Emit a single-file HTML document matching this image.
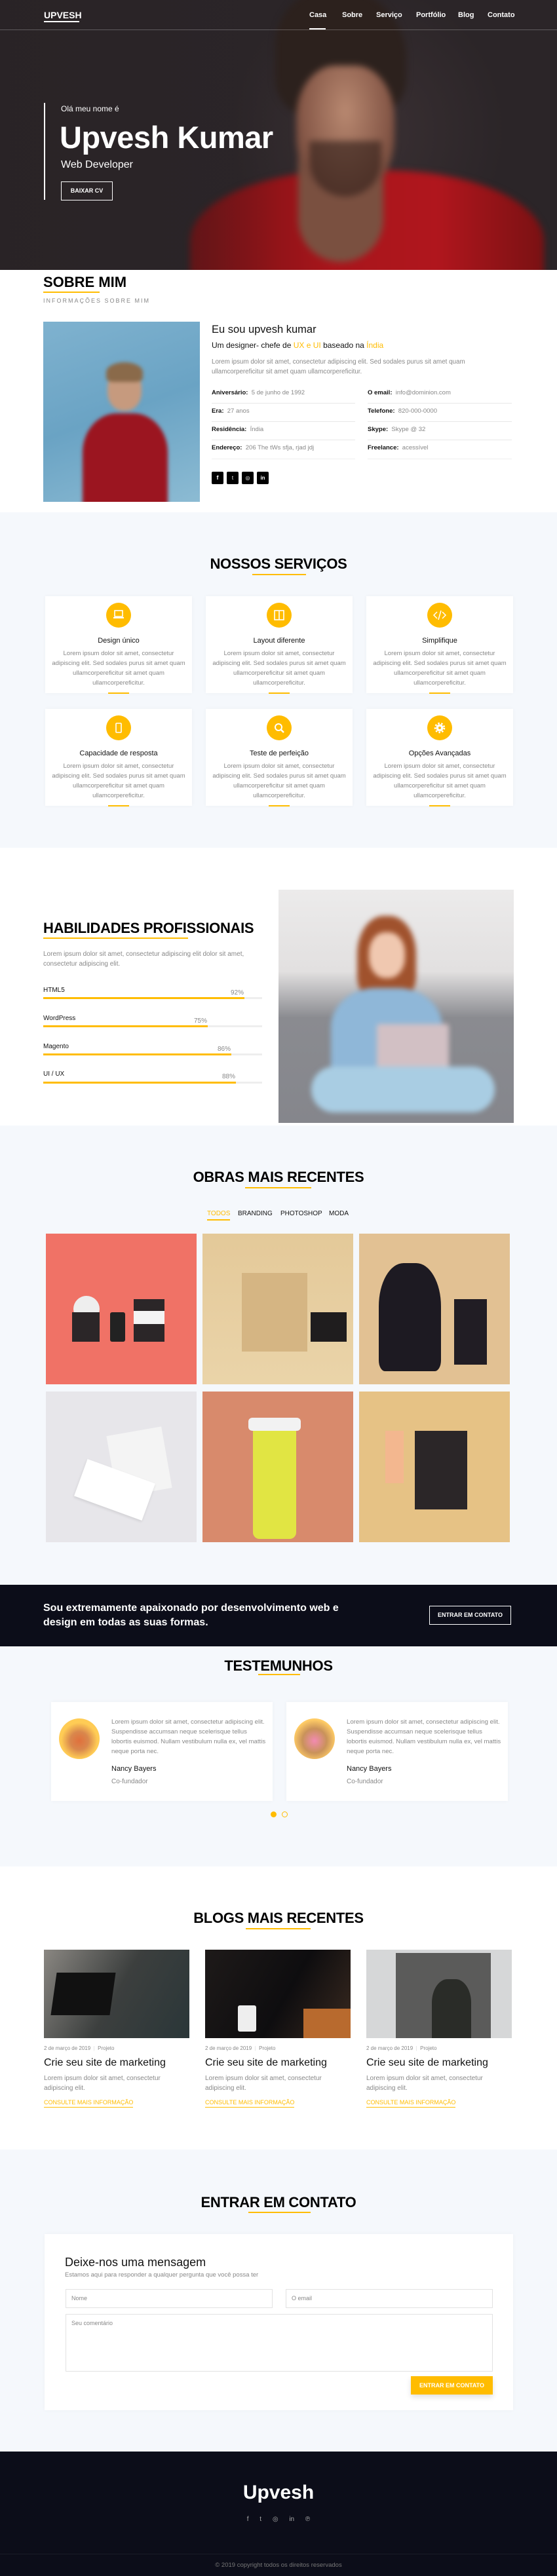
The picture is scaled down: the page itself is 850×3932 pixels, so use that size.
<!DOCTYPE html>
<html><head><meta charset="utf-8">
<style>
*{box-sizing:border-box;margin:0;padding:0}
body{width:850px;height:3932px;position:relative;font-family:"Liberation Sans",sans-serif;background:#fff;overflow:hidden;color:#111}
.a{position:absolute}
.sec{position:absolute;left:0;width:850px}
.h2{position:absolute;left:0;width:850px;text-align:center;font-weight:bold;font-size:22px;color:#000;letter-spacing:-0.3px}
.ul{position:absolute;height:2px;background:#ffbc00}
.p{font-size:10px;line-height:15px;color:#888}
.card{position:absolute;background:#fff;box-shadow:0 0 6px rgba(0,0,0,0.04)}
.ic{position:absolute;width:38px;height:38px;border-radius:50%;background:#ffbc00;left:93px;top:10px}
.ct{position:absolute;left:0;width:100%;text-align:center;top:62px;font-size:11px;color:#111}
.cp{position:absolute;left:10px;right:10px;top:80px;text-align:center;font-size:9.5px;line-height:15px;color:#888}
.cb{position:absolute;left:96px;bottom:-1px;width:32px;height:2px;background:#ffbc00}
.lbl{font-size:10px;color:#111}
.bar{position:absolute;left:66px;width:334px;height:3px;background:#eee}
.bar i{display:block;height:3px;background:#ffbc00}
.pt{position:absolute;width:230px;height:230px;overflow:hidden}
.bl{filter:blur(5px)}
</style></head><body>

<!-- HERO -->
<div class="sec" style="top:0;height:412px;background:#2b2528;overflow:hidden">
  <div class="a" style="left:0;top:0;width:850px;height:412px;background:radial-gradient(ellipse 300px 320px at 560px 200px,#3a3033 0%,#2b2528 70%)"></div>
  <div class="a bl" style="left:0;top:0;width:850px;height:412px">
    <div class="a" style="left:420px;top:-20px;width:200px;height:200px;border-radius:45% 55% 30% 30%;background:#2c211d"></div>
    <div class="a" style="left:290px;top:260px;width:540px;height:240px;border-radius:45% 45% 0 0;background:linear-gradient(90deg,#6e1214,#a8151b 40%,#b0161d 70%,#7a1113)"></div>
    <div class="a" style="left:455px;top:230px;width:130px;height:170px;border-radius:0 0 65px 65px;background:#7a5040"></div>
    <div class="a" style="left:452px;top:100px;width:150px;height:200px;border-radius:40% 40% 45% 45%;background:radial-gradient(ellipse at 50% 35%,#b88870,#845646 65%,#4e3228)"></div>
    <div class="a" style="left:472px;top:215px;width:110px;height:85px;border-radius:0 0 55px 55px;background:rgba(45,28,24,0.6)"></div>
  </div>
  <div class="a" style="left:0;top:0;width:850px;height:412px;background:linear-gradient(90deg,rgba(40,34,37,0.6),rgba(0,0,0,0) 50%)"></div>
  <div class="a" style="left:67px;top:15px;font-size:14px;font-weight:bold;color:#fff">UPVESH</div>
  <div class="a" style="left:67px;top:32px;width:54px;height:2px;background:#fff"></div>
  <div class="a" style="left:0;top:45px;width:850px;height:1px;background:rgba(255,255,255,0.25)"></div>
  <div class="a" style="top:17px;left:472px;font-size:11px;color:#fff;font-weight:bold">Casa</div>
  <div class="a" style="left:472px;top:43px;width:25px;height:2px;background:#fff"></div>
  <div class="a" style="top:17px;left:522px;font-size:11px;color:#fff;font-weight:bold">Sobre</div>
  <div class="a" style="top:17px;left:574px;font-size:11px;color:#fff;font-weight:bold">Serviço</div>
  <div class="a" style="top:17px;left:635px;font-size:11px;color:#fff;font-weight:bold">Portfólio</div>
  <div class="a" style="top:17px;left:699px;font-size:11px;color:#fff;font-weight:bold">Blog</div>
  <div class="a" style="top:17px;left:744px;font-size:11px;color:#fff;font-weight:bold">Contato</div>
  <div class="a" style="left:67px;top:157px;width:2px;height:148px;background:#fff"></div>
  <div class="a" style="left:93px;top:159px;font-size:12px;color:#fff">Olá meu nome é</div>
  <div class="a" style="left:91px;top:182px;font-size:47px;font-weight:bold;color:#fff;letter-spacing:-0.5px">Upvesh Kumar</div>
  <div class="a" style="left:93px;top:243px;font-size:16px;color:#fff">Web Developer</div>
  <div class="a" style="left:93px;top:277px;width:79px;height:29px;border:1px solid #fff;color:#fff;font-size:9px;font-weight:bold;text-align:center;line-height:27px">BAIXAR CV</div>
</div>

<!-- ABOUT -->
<div class="sec" style="top:412px;height:370px;background:#fff">
  <div class="a" style="left:66px;top:6px;font-size:22px;font-weight:bold;color:#000">SOBRE MIM</div>
  <div class="ul" style="left:66px;top:33px;width:86px"></div>
  <div class="a" style="left:66px;top:42px;font-size:9px;letter-spacing:2px;color:#888">INFORMAÇÕES SOBRE MIM</div>
  <div class="a" style="left:66px;top:79px;width:239px;height:275px;background:linear-gradient(160deg,#7fb2cf,#6aa3c4 50%,#8cbbd3);overflow:hidden">
    <div class="bl a" style="left:0;top:0;width:239px;height:275px;filter:blur(3px)">
      <div class="a" style="left:98px;top:72px;width:52px;height:64px;border-radius:45%;background:#c69a7e"></div>
      <div class="a" style="left:96px;top:62px;width:56px;height:30px;border-radius:50% 50% 20% 20%;background:#8a6a4a"></div>
      <div class="a" style="left:60px;top:140px;width:130px;height:150px;border-radius:40% 40% 0 0;background:#9b1520"></div>
    </div>
  </div>
  <div class="a" style="left:323px;top:82px;font-size:16.5px;color:#111">Eu sou upvesh kumar</div>
  <div class="a" style="left:323px;top:108px;font-size:12px;color:#111">Um designer- chefe de <span style="color:#ffbc00">UX e UI</span> baseado na <span style="color:#ffbc00">Índia</span></div>
  <div class="a p" style="left:323px;top:133px;width:460px;font-size:9.8px">Lorem ipsum dolor sit amet, consectetur adipiscing elit. Sed sodales purus sit amet quam ullamcorpereficitur sit amet quam ullamcorpereficitur.</div>
  <div class="a" style="left:323px;top:182px;width:219px;font-size:9.5px;color:#888"><b style="color:#111">Aniversário:</b>&nbsp; 5 de junho de 1992</div>
  <div class="a" style="left:323px;top:210px;font-size:9.5px;color:#888"><b style="color:#111">Era:</b>&nbsp; 27 anos</div>
  <div class="a" style="left:323px;top:238px;font-size:9.5px;color:#888"><b style="color:#111">Residência:</b>&nbsp; Índia</div>
  <div class="a" style="left:323px;top:266px;font-size:9.5px;color:#888"><b style="color:#111">Endereço:</b>&nbsp; 206 The tWs sfja, rjad jdj</div>
  <div class="a" style="left:561px;top:182px;font-size:9.5px;color:#888"><b style="color:#111">O email:</b>&nbsp; info@dominion.com</div>
  <div class="a" style="left:561px;top:210px;font-size:9.5px;color:#888"><b style="color:#111">Telefone:</b>&nbsp; 820-000-0000</div>
  <div class="a" style="left:561px;top:238px;font-size:9.5px;color:#888"><b style="color:#111">Skype:</b>&nbsp; Skype @ 32</div>
  <div class="a" style="left:561px;top:266px;font-size:9.5px;color:#888"><b style="color:#111">Freelance:</b>&nbsp; acessível</div>
  <div class="a" style="left:323px;top:203px;width:219px;height:1px;background:#e8e8e8"></div>
  <div class="a" style="left:323px;top:231px;width:219px;height:1px;background:#e8e8e8"></div>
  <div class="a" style="left:323px;top:259px;width:219px;height:1px;background:#e8e8e8"></div>
  <div class="a" style="left:323px;top:288px;width:219px;height:1px;background:#eee"></div>
  <div class="a" style="left:561px;top:203px;width:220px;height:1px;background:#e8e8e8"></div>
  <div class="a" style="left:561px;top:231px;width:220px;height:1px;background:#e8e8e8"></div>
  <div class="a" style="left:561px;top:259px;width:220px;height:1px;background:#e8e8e8"></div>
  <div class="a" style="left:561px;top:288px;width:220px;height:1px;background:#eee"></div>
  <div class="a" style="left:323px;top:308px;width:18px;height:19px;background:#000;border-radius:2px;color:#fff;font-size:9px;font-weight:bold;text-align:center;line-height:19px">f</div>
  <div class="a" style="left:346px;top:308px;width:18px;height:19px;background:#000;border-radius:2px;color:#fff;font-size:8px;text-align:center;line-height:19px">t</div>
  <div class="a" style="left:369px;top:308px;width:18px;height:19px;background:#000;border-radius:2px;color:#fff;font-size:8px;text-align:center;line-height:19px">◎</div>
  <div class="a" style="left:392px;top:308px;width:18px;height:19px;background:#000;border-radius:2px;color:#fff;font-size:8px;font-weight:bold;text-align:center;line-height:19px">in</div>
</div>

<!-- SERVICES -->
<div class="sec" style="top:782px;height:512px;background:#f5f8fc">
  <div class="h2" style="top:66px">NOSSOS SERVIÇOS</div>
  <div class="ul" style="left:385px;top:94px;width:82px"></div>
  <div class="card" style="left:69px;top:128px;width:224px;height:148px"><div class="ic"><svg width="38" height="38" viewBox="0 0 38 38"><rect x="13" y="12" width="12" height="9" fill="none" stroke="#fff" stroke-width="1.6"/><rect x="11" y="22" width="16" height="2" fill="#fff"/></svg></div><div class="ct">Design único</div><div class="cp">Lorem ipsum dolor sit amet, consectetur adipiscing elit. Sed sodales purus sit amet quam ullamcorpereficitur sit amet quam ullamcorpereficitur.</div><div class="cb"></div></div>
  <div class="card" style="left:314px;top:128px;width:224px;height:148px"><div class="ic"><svg width="38" height="38" viewBox="0 0 38 38"><rect x="12" y="12" width="14" height="14" fill="none" stroke="#fff" stroke-width="1.6"/><line x1="19" y1="12" x2="19" y2="26" stroke="#fff" stroke-width="1.6"/></svg></div><div class="ct">Layout diferente</div><div class="cp">Lorem ipsum dolor sit amet, consectetur adipiscing elit. Sed sodales purus sit amet quam ullamcorpereficitur sit amet quam ullamcorpereficitur.</div><div class="cb"></div></div>
  <div class="card" style="left:559px;top:128px;width:224px;height:148px"><div class="ic"><svg width="38" height="38" viewBox="0 0 38 38"><path d="M15 14l-5 5 5 5M23 14l5 5-5 5M21 12l-4 14" fill="none" stroke="#fff" stroke-width="1.5"/></svg></div><div class="ct">Simplifique</div><div class="cp">Lorem ipsum dolor sit amet, consectetur adipiscing elit. Sed sodales purus sit amet quam ullamcorpereficitur sit amet quam ullamcorpereficitur.</div><div class="cb"></div></div>
  <div class="card" style="left:69px;top:300px;width:224px;height:148px"><div class="ic"><svg width="38" height="38" viewBox="0 0 38 38"><rect x="15" y="12" width="8" height="14" rx="1" fill="none" stroke="#fff" stroke-width="1.6"/></svg></div><div class="ct">Capacidade de resposta</div><div class="cp">Lorem ipsum dolor sit amet, consectetur adipiscing elit. Sed sodales purus sit amet quam ullamcorpereficitur sit amet quam ullamcorpereficitur.</div><div class="cb"></div></div>
  <div class="card" style="left:314px;top:300px;width:224px;height:148px"><div class="ic"><svg width="38" height="38" viewBox="0 0 38 38"><circle cx="18" cy="18" r="5" fill="none" stroke="#fff" stroke-width="2"/><line x1="21.5" y1="21.5" x2="26" y2="26" stroke="#fff" stroke-width="2.5"/></svg></div><div class="ct">Teste de perfeição</div><div class="cp">Lorem ipsum dolor sit amet, consectetur adipiscing elit. Sed sodales purus sit amet quam ullamcorpereficitur sit amet quam ullamcorpereficitur.</div><div class="cb"></div></div>
  <div class="card" style="left:559px;top:300px;width:224px;height:148px"><div class="ic"><svg width="38" height="38" viewBox="0 0 38 38"><circle cx="19" cy="19" r="5.5" fill="#fff"/><circle cx="19" cy="19" r="7" fill="none" stroke="#fff" stroke-width="2.5" stroke-dasharray="2.5 2.5"/><circle cx="19" cy="19" r="2" fill="#ffbc00"/></svg></div><div class="ct">Opções Avançadas</div><div class="cp">Lorem ipsum dolor sit amet, consectetur adipiscing elit. Sed sodales purus sit amet quam ullamcorpereficitur sit amet quam ullamcorpereficitur.</div><div class="cb"></div></div>
</div>

<!-- SKILLS -->
<div class="sec" style="top:1294px;height:424px;background:#fff">
  <div class="a" style="left:66px;top:110px;font-size:22px;font-weight:bold;color:#000;letter-spacing:-0.3px">HABILIDADES PROFISSIONAIS</div>
  <div class="ul" style="left:66px;top:137px;width:221px"></div>
  <div class="a p" style="left:66px;top:155px;width:340px">Lorem ipsum dolor sit amet, consectetur adipiscing elit dolor sit amet, consectetur adipiscing elit.</div>
  <div class="a lbl" style="left:66px;top:212px">HTML5</div><div class="a p" style="left:352px;top:214px">92%</div>
  <div class="bar" style="top:228px"><i style="width:92%"></i></div>
  <div class="a lbl" style="left:66px;top:255px">WordPress</div><div class="a p" style="left:296px;top:257px">75%</div>
  <div class="bar" style="top:271px"><i style="width:75%"></i></div>
  <div class="a lbl" style="left:66px;top:298px">Magento</div><div class="a p" style="left:332px;top:300px">86%</div>
  <div class="bar" style="top:314px"><i style="width:86%"></i></div>
  <div class="a lbl" style="left:66px;top:340px">UI / UX</div><div class="a p" style="left:339px;top:342px">88%</div>
  <div class="bar" style="top:357px"><i style="width:88%"></i></div>
  <div class="a" style="left:425px;top:64px;width:359px;height:356px;background:linear-gradient(180deg,#ecebeb 0%,#e2e0e0 35%,#8a8b90 55%,#85868c 100%);overflow:hidden">
    <div class="a" style="left:0;top:0;width:359px;height:356px;filter:blur(4px)">
      <div class="a" style="left:120px;top:40px;width:90px;height:130px;border-radius:45% 45% 30% 30%;background:#a0522d"></div>
      <div class="a" style="left:138px;top:65px;width:55px;height:70px;border-radius:45%;background:#f0c8b0"></div>
      <div class="a" style="left:80px;top:150px;width:170px;height:150px;border-radius:40% 40% 10% 10%;background:#8fb7d8"></div>
      <div class="a" style="left:150px;top:205px;width:110px;height:85px;background:#d2c0c4;border-radius:4px"></div>
      <div class="a" style="left:50px;top:270px;width:280px;height:70px;border-radius:40px;background:#a9cde3"></div>
    </div>
  </div>
</div>

<!-- PORTFOLIO -->
<div class="sec" style="top:1718px;height:701px;background:#f5f8fc">
  <div class="h2" style="top:66px">OBRAS MAIS RECENTES</div>
  <div class="ul" style="left:374px;top:94px;width:101px"></div>
  <div class="a" style="left:316px;top:129px;font-size:10px;color:#ffbc00">TODOS</div>
  <div class="a" style="left:316px;top:143px;width:35px;height:1.5px;background:#ffbc00"></div>
  <div class="a" style="left:363px;top:129px;font-size:10px;color:#111">BRANDING</div>
  <div class="a" style="left:428px;top:129px;font-size:10px;color:#111">PHOTOSHOP</div>
  <div class="a" style="left:502px;top:129px;font-size:10px;color:#111">MODA</div>
  <div class="pt" style="left:70px;top:165px;background:#f07266">
    <div class="a" style="left:42px;top:95px;width:40px;height:40px;border-radius:50%;background:#eee"></div>
    <div class="a" style="left:40px;top:120px;width:42px;height:45px;background:#2b2628"></div>
    <div class="a" style="left:98px;top:120px;width:23px;height:45px;background:#222;border-radius:3px"></div>
    <div class="a" style="left:134px;top:100px;width:47px;height:65px;background:#2b2628"></div>
    <div class="a" style="left:134px;top:118px;width:47px;height:20px;background:#f4f4f4"></div>
  </div>
  <div class="pt" style="left:309px;top:165px;background:linear-gradient(180deg,#e4c999,#ead4a9)">
    <div class="a" style="left:60px;top:60px;width:100px;height:120px;background:#d5b583"></div>
    <div class="a" style="left:165px;top:120px;width:55px;height:45px;background:#1f1d1e"></div>
  </div>
  <div class="pt" style="left:548px;top:165px;background:#e2c193">
    <div class="a" style="left:30px;top:45px;width:95px;height:165px;border-radius:40% 40% 10% 10%;background:#1d1a22"></div>
    <div class="a" style="left:145px;top:100px;width:50px;height:100px;background:#211d24"></div>
  </div>
  <div class="pt" style="left:70px;top:406px;background:#e7e6ea">
    <div class="a" style="left:100px;top:60px;width:85px;height:95px;background:#f4f4f4;transform:rotate(-10deg)"></div>
    <div class="a" style="left:50px;top:120px;width:110px;height:60px;background:#fff;transform:rotate(20deg);box-shadow:0 2px 4px rgba(0,0,0,.1)"></div>
  </div>
  <div class="pt" style="left:309px;top:406px;background:#d88a6c">
    <div class="a" style="left:77px;top:45px;width:66px;height:180px;background:#e1e543;border-radius:4px 4px 10px 10px"></div>
    <div class="a" style="left:70px;top:40px;width:80px;height:20px;background:#f2f2f2;border-radius:6px"></div>
  </div>
  <div class="pt" style="left:548px;top:406px;background:#e6c285">
    <div class="a" style="left:85px;top:60px;width:80px;height:120px;background:#2b2628"></div>
    <div class="a" style="left:40px;top:60px;width:28px;height:80px;background:#f3b78f"></div>
  </div>
</div>

<!-- CTA -->
<div class="sec" style="top:2419px;height:94px;background:#0c0d19">
  <div class="a" style="left:66px;top:25px;font-size:16px;font-weight:bold;color:#fff;line-height:22px;width:480px">Sou extremamente apaixonado por desenvolvimento web e design em todas as suas formas.</div>
  <div class="a" style="left:655px;top:32px;width:125px;height:29px;border:1px solid #fff;color:#fff;font-size:9px;font-weight:bold;text-align:center;line-height:27px">ENTRAR EM CONTATO</div>
</div>

<!-- TESTIMONIALS -->
<div class="sec" style="top:2513px;height:336px;background:#f5f8fc">
  <div class="h2" style="top:17px">TESTEMUNHOS</div>
  <div class="ul" style="left:394px;top:42px;width:64px"></div>
  <div class="card" style="left:78px;top:85px;width:338px;height:151px">
    <div class="a" style="left:12px;top:25px;width:62px;height:62px;border-radius:50%;background:radial-gradient(circle at 50% 55%,#e0703c 0,#d9874d 30%,#ffcc55 60%)"></div>
    <div class="a p" style="left:92px;top:23px;width:240px;font-size:9.6px">Lorem ipsum dolor sit amet, consectetur adipiscing elit. Suspendisse accumsan neque scelerisque tellus lobortis euismod. Nullam vestibulum nulla ex, vel mattis neque porta nec.</div>
    <div class="a" style="left:92px;top:96px;font-size:11px;color:#111">Nancy Bayers</div>
    <div class="a p" style="left:92px;top:114px">Co-fundador</div>
  </div>
  <div class="card" style="left:437px;top:85px;width:338px;height:151px">
    <div class="a" style="left:12px;top:25px;width:62px;height:62px;border-radius:50%;background:radial-gradient(circle at 50% 55%,#f28bb2 0,#c9925a 40%,#ffcc66 70%)"></div>
    <div class="a p" style="left:92px;top:23px;width:240px;font-size:9.6px">Lorem ipsum dolor sit amet, consectetur adipiscing elit. Suspendisse accumsan neque scelerisque tellus lobortis euismod. Nullam vestibulum nulla ex, vel mattis neque porta nec.</div>
    <div class="a" style="left:92px;top:96px;font-size:11px;color:#111">Nancy Bayers</div>
    <div class="a p" style="left:92px;top:114px">Co-fundador</div>
  </div>
  <div class="a" style="left:413px;top:252px;width:9px;height:9px;border-radius:50%;background:#ffbc00"></div>
  <div class="a" style="left:430px;top:252px;width:9px;height:9px;border-radius:50%;border:1px solid #ffbc00"></div>
</div>

<!-- BLOGS -->
<div class="sec" style="top:2849px;height:432px;background:#fff">
  <div class="h2" style="top:66px">BLOGS MAIS RECENTES</div>
  <div class="ul" style="left:375px;top:94px;width:99px"></div>
  <div class="a" style="left:67px;top:127px;width:222px;height:135px;background:linear-gradient(120deg,#8a8782,#3c3f3e 50%,#2a3638);overflow:hidden"><div class="a" style="left:15px;top:35px;width:90px;height:65px;background:#111;transform:skewX(-8deg)"></div></div>
  <div class="a" style="left:313px;top:127px;width:222px;height:135px;background:linear-gradient(120deg,#1e1a19,#0e0d0f 55%,#3a2a20);overflow:hidden"><div class="a" style="left:50px;top:85px;width:28px;height:40px;background:#eee;border-radius:3px"></div><div class="a" style="left:150px;top:90px;width:72px;height:45px;background:#b86a2e"></div></div>
  <div class="a" style="left:559px;top:127px;width:222px;height:135px;background:#d6d7d8;overflow:hidden"><div class="a" style="left:45px;top:5px;width:145px;height:130px;background:#5b5b5a"></div><div class="a" style="left:100px;top:45px;width:60px;height:90px;border-radius:40% 40% 0 0;background:#2a2c28"></div></div>
  <div class="a p" style="left:67px;top:270px;font-size:8px">2 de março de 2019 &nbsp;<span style="color:#ddd">|</span>&nbsp; Projeto</div>
  <div class="a p" style="left:313px;top:270px;font-size:8px">2 de março de 2019 &nbsp;<span style="color:#ddd">|</span>&nbsp; Projeto</div>
  <div class="a p" style="left:559px;top:270px;font-size:8px">2 de março de 2019 &nbsp;<span style="color:#ddd">|</span>&nbsp; Projeto</div>
  <div class="a" style="left:67px;top:291px;font-size:16px;color:#111">Crie seu site de marketing</div>
  <div class="a" style="left:313px;top:291px;font-size:16px;color:#111">Crie seu site de marketing</div>
  <div class="a" style="left:559px;top:291px;font-size:16px;color:#111">Crie seu site de marketing</div>
  <div class="a p" style="left:67px;top:316px;width:200px">Lorem ipsum dolor sit amet, consectetur adipiscing elit.</div>
  <div class="a p" style="left:313px;top:316px;width:200px">Lorem ipsum dolor sit amet, consectetur adipiscing elit.</div>
  <div class="a p" style="left:559px;top:316px;width:200px">Lorem ipsum dolor sit amet, consectetur adipiscing elit.</div>
  <div class="a" style="left:67px;top:355px;font-size:9px;color:#ffbc00;border-bottom:1.5px solid #ffbc00;padding-bottom:2px">CONSULTE MAIS INFORMAÇÃO</div>
  <div class="a" style="left:313px;top:355px;font-size:9px;color:#ffbc00;border-bottom:1.5px solid #ffbc00;padding-bottom:2px">CONSULTE MAIS INFORMAÇÃO</div>
  <div class="a" style="left:559px;top:355px;font-size:9px;color:#ffbc00;border-bottom:1.5px solid #ffbc00;padding-bottom:2px">CONSULTE MAIS INFORMAÇÃO</div>
</div>

<!-- CONTACT -->
<div class="sec" style="top:3281px;height:461px;background:#f5f8fc">
  <div class="h2" style="top:68px">ENTRAR EM CONTATO</div>
  <div class="ul" style="left:379px;top:95px;width:95px"></div>
  <div class="card" style="left:68px;top:129px;width:715px;height:269px">
    <div class="a" style="left:31px;top:33px;font-size:18px;color:#111">Deixe-nos uma mensagem</div>
    <div class="a p" style="left:31px;top:55px;font-size:9.5px">Estamos aqui para responder a qualquer pergunta que você possa ter</div>
    <div class="a" style="left:32px;top:84px;width:316px;height:29px;border:1px solid #e2e2e2;font-size:9px;color:#888;padding:8px 8px">Nome</div>
    <div class="a" style="left:368px;top:84px;width:316px;height:29px;border:1px solid #e2e2e2;font-size:9px;color:#888;padding:8px 8px">O email</div>
    <div class="a" style="left:32px;top:122px;width:652px;height:88px;border:1px solid #e2e2e2;font-size:9px;color:#888;padding:8px 8px">Seu comentário</div>
    <div class="a" style="left:559px;top:217px;width:125px;height:28px;background:#ffbc00;color:#fff;font-size:9px;font-weight:bold;text-align:center;line-height:28px;box-shadow:0 4px 8px rgba(0,0,0,0.12)">ENTRAR EM CONTATO</div>
  </div>
</div>

<!-- FOOTER -->
<div class="sec" style="top:3742px;height:190px;background:#0c0d19">
  <div class="a" style="left:0;width:850px;top:46px;text-align:center;font-size:30px;font-weight:bold;color:#fff">Upvesh</div>
  <div class="a" style="left:0;width:850px;top:98px;text-align:center;font-size:10px;color:#aaa;word-spacing:14px">f t ◎ in ℗</div>
  <div class="a" style="left:0;top:156px;width:850px;height:1px;background:#1b1c28"></div>
  <div class="a" style="left:0;width:850px;top:168px;text-align:center;font-size:9.5px;color:#777">© 2019 copyright todos os direitos reservados</div>
</div>
</body></html>
